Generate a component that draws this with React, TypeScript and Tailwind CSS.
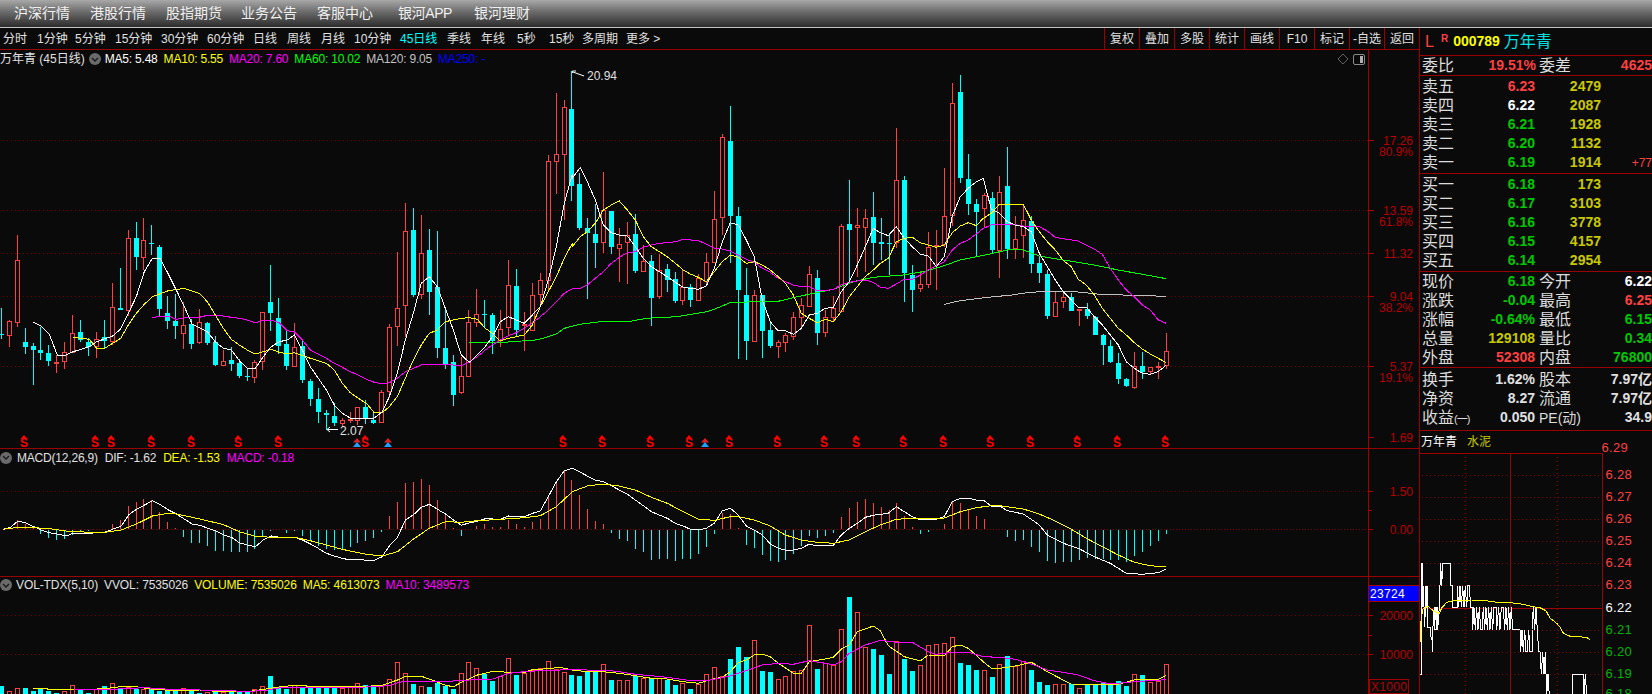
import React from "react";

type P = number[];
const RED = "#ff4040";
const CYAN = "#00ffff";
const AX = "#b80000";

// segment helper: [scaleX, offsetX, offsetY, [zx,zy,zx,zy,...]]; y is always zoom/3
type Seg = [number, number, number, P];
function line(segs: Seg[]): string {
  const out: string[] = [];
  let last = -1;
  for (const [sx, ox, oy, p] of segs) {
    for (let i = 0; i < p.length; i += 2) {
      const x = ox + p[i] / sx;
      if (x <= last) continue;
      last = x;
      out.push(`${x.toFixed(1)},${(oy + p[i + 1] / 3).toFixed(1)}`);
    }
  }
  return out.join(" ");
}
const cx = (k: number) => Math.round(0.8 + 7.926 * k);

// [red?, high, top, bottom, low]
const C: number[][] = [
  [0,775,852,856,866],[1,810,814,857,890],[1,555,631,818,830],[0,835,877,890,912],[0,880,888,900,1005],[0,830,900,908,930],[0,885,910,933,948],[1,915,937,941,968],
  [1,877,905,937,957],[1,795,848,908,910],[0,810,847,870,875],[0,865,875,890,918],[1,847,868,890,923],[0,810,862,872,895],[1,700,772,876,885],[0,655,775,779,780],
  [1,540,565,782,798],[0,517,565,620,660],[1,505,571,623,660],[0,525,579,581,615],[0,585,592,776,800],[0,738,790,812,837],[0,733,814,827,867],[1,755,826,851,897],
  [0,808,823,882,897],[1,777,817,880,882],[0,815,820,878,885],[0,858,875,945,948],[1,900,934,947,948],[0,890,931,942,963],[0,928,940,977,983],[0,955,978,981,993],
  [1,930,937,983,998],[1,787,787,937,960],[0,645,757,788,843],[0,744,805,887,912],[0,843,883,947,960],[1,820,890,950,950],[0,870,888,990,998],[0,987,993,1047,1068],
  [0,1015,1048,1086,1118],[0,1080,1090,1094,1140],[0,1060,1098,1118,1128],[1,1105,1110,1122,1130],[1,1085,1108,1112,1118],[1,1072,1072,1112,1125],[0,1050,1072,1108,1122],[0,1085,1110,1118,1122],
  [1,1020,1027,1120,1120],[1,822,832,1027,1045],[1,605,775,830,888],[1,460,544,767,860],[0,475,540,735,740],[1,495,610,735,748],[0,537,600,725,795],[0,543,710,893,924],
  [0,770,894,943,957],[0,915,936,1035,1068],[1,920,978,1028,1032],[1,780,817,980,980],[1,717,793,818,830],[0,750,792,796,830],[0,788,795,873,912],[1,780,838,873,890],
  [1,630,706,835,855],[0,657,708,840,858],[1,785,822,823,902],[1,698,736,842,842],[1,670,690,736,770],[1,315,333,693,722],[1,129,313,335,432],[1,150,172,314,510],
  [0,62,177,407,453],[0,370,402,533,540],[0,505,534,549,747],[0,462,552,578,655],[1,366,480,578,610],[0,482,483,590,612],[1,535,583,596,695],[1,517,555,580,702],
  [0,492,552,664,668],[1,585,634,665,665],[0,615,634,743,828],[1,612,661,740,747],[0,642,657,690,725],[0,666,688,752,758],[1,660,712,754,765],[0,702,712,750,770],
  [1,672,683,752,752],[1,610,637,695,705],[1,423,508,638,640],[1,252,262,505,555],[0,168,273,497,640],[0,472,498,720,927],[0,653,735,873,930],[1,720,736,875,875],
  [0,735,735,842,923],[0,815,840,888,893],[1,870,877,890,923],[1,850,856,878,905],[1,785,802,860,870],[1,745,766,803,838],[1,648,673,770,770],[0,660,684,848,885],
  [1,780,802,848,860],[1,738,774,803,815],[1,522,529,785,785],[0,390,522,540,690],[1,475,526,533,680],[1,477,505,533,665],[0,427,502,578,645],[0,503,576,581,630],
  [0,548,578,580,675],[1,235,391,578,595],[0,378,390,668,755],[0,645,676,720,785],[1,662,703,716,725],[1,545,592,705,715],[1,540,584,591,720],[1,355,498,584,590],
  [1,100,160,498,527],[0,75,127,383,398],[0,312,388,462,495],[0,447,462,486,618],[1,430,435,478,535],[0,427,445,600,613],[1,378,427,602,683],[0,292,408,597,627],
  [1,498,568,597,627],[1,462,511,557,623],[0,498,514,641,668],[0,622,640,668,698],[0,660,672,797,808],[1,725,757,800,800],[1,722,742,757,773],[0,730,742,782,783],
  [1,778,778,782,828],[0,760,776,797,808],[0,798,800,855,855],[0,852,855,885,945],[0,870,888,935,940],[0,910,940,987,1002],[0,985,988,1007,1012],[1,907,949,1013,1018],
  [0,905,949,966,987],[1,950,950,966,972],[1,937,947,953,987],[1,849,904,947,957],
];

const MA5 = line([
  [3,0,50,[100,817,124,828,148,853,172,915,196,916,220,905,268,890,290,875,338,858,362,837,385,790,409,740,433,665,457,625,481,625,529,720,553,770,577,823,622,845,646,875,670,895,694,900,718,932,742,955,766,955,790,920,814,890,838,875,862,870]],
  [3,290,50,[13,855,37,900,61,950,85,985,109,1020,133,1065,157,1090,181,1104,229,1104,253,1104,277,1085,298,1040,322,970,346,870,370,790,394,700,418,680,442,710,466,775,490,840,514,915,538,937,562,915,586,890,607,860,631,815,655,800,679,810,703,820,727,795,751,770,775,690,799,590,823,460,847,372]],
  [3,560,50,[37,385,61,352,82,395,106,450,130,525,154,548,178,555,202,558,226,590,250,625,274,650,298,665,322,680,346,697,370,712,391,715,415,718,439,708,463,655,487,575,511,518,535,525,559,570,583,620,607,750,631,815,655,843,676,842,700,853,724,835,748,795,772,790,796,775,820,772,844,725,868,695,892,645,916,590,940,535,961,548,985,557,1009,530,1033,565,1057,590,1081,613,1105,618,1129,650,1153,620,1177,498,1201,440,1225,415,1249,395,1270,385,1294,478,1318,490,1342,515]],
  [3,1000,50,[46,525,70,530,94,545,118,610,142,650,166,690,190,725,214,750,235,772,259,772,283,800,307,825,331,855,355,885,379,935,403,955,427,970,451,973,475,965,499,945]],
]);
const MA10 = line([
  [3,0,50,[220,862,268,868,290,895,314,895,362,865,385,825,409,790,433,763,457,740,505,722,553,715,598,730,622,755,646,795,670,835,694,868,718,885,742,900,766,912,790,905,814,898,838,907,862,912]],
  [3,290,50,[13,908,61,925,85,932,109,940,133,960,157,1000,181,1028,205,1045,229,1060,253,1088,277,1088,298,1070,322,1040,346,985,370,930,394,885,418,850,442,840,466,815,514,805,538,803,562,808,586,835,607,850,631,873,655,865,703,855,727,825,751,770,775,725,799,680,823,625,847,580]],
  [3,560,50,[37,590,61,560,82,545,106,520,130,480,154,465,178,453,202,480,226,510,250,560,274,590,298,605,322,620,346,640,370,660,391,672,415,682,439,695,463,665,487,635,511,615,535,622,559,640,583,635,607,645,631,660,655,680,676,700,700,735,724,790,748,805,772,818,796,808,820,815,844,785,868,740,892,710,916,680,940,660,961,640,985,625,1009,575,1033,565,1057,562,1081,578,1105,585,1129,592,1153,585,1177,548,1201,528,1225,518,1249,527,1270,505,1294,490,1318,463,1350,463]],
  [3,1000,50,[70,463,94,510,118,545,142,575,166,600,190,632,214,650,235,688,259,705,283,735,307,775,331,805,355,835,379,855,403,878,427,897,451,912,475,925,499,938]],
]);
const MA20 = line([
  [3,0,50,[457,802,505,798,529,808,553,804,598,802,622,796,646,796,670,798,694,802,718,805,742,810,766,818,790,811,814,811,838,818,862,842]],
  [3,290,50,[13,845,37,870,61,900,109,925,133,940,157,952,181,965,205,975,229,988,253,997,277,1002,298,998,322,985,346,965,370,955,394,945,418,942,466,942,514,948,538,935,562,920,586,900,607,885,631,870,655,857,679,848,703,835,727,820,751,800,775,780,799,755,823,730,847,716]],
  [3,560,50,[13,730,37,717,61,715,82,705,106,685,130,665,154,640,178,622,202,608,226,605,250,592,274,585,298,580,322,578,346,575,370,568,415,572,439,582,463,594,487,597,511,603,535,615,559,628,583,637,607,655,631,667,655,685,676,695,700,705,724,710,748,710,772,722,796,722,820,718,844,705,868,697,892,693,916,690,940,697,961,712,985,715,1009,702,1033,688,1057,688,1081,675,1105,660,1129,648,1153,635,1177,600,1201,580,1225,570,1249,552,1270,535,1294,525,1318,522,1350,522]],
  [3,1000,50,[70,528,118,530,142,543,166,562,190,566,235,573,259,585,283,597,307,613,331,655,355,690,379,720,403,740,427,765,451,780,475,810,499,820]],
]);
const MA60 = line([
  [3,290,50,[538,877,610,878,655,876,735,870,760,865,799,852,823,835,870,823]],
  [3,560,50,[25,828,60,820,120,815,210,814,260,805,350,800,440,785,470,775,510,758,560,756,650,755,700,743,760,730,820,718,880,695,940,682,1030,675,1090,665,1150,648,1200,630,1290,612,1350,598]],
  [3,1000,50,[46,597,70,600,118,618,190,630,283,645,355,660,427,673,499,686]],
]);
const MA120 = line([
  [3,560,50,[1153,763,1200,752,1300,740,1350,736]],
  [3,1000,50,[80,728,120,725,225,725,300,733,499,739]],
]);

const HIST: number[] = [0,0,26,16,6,-12,-24,-30,-27,-14,-5,-2,0,0,16,26,68,80,91,88,51,20,2,-20,-38,-39,-47,-62,-62,-65,-67,-67,-57,-20,-2,0,-8,-2,-18,-34,-47,-57,-60,-59,-50,-38,-32,-25,-5,40,80,139,140,151,133,88,43,2,-17,0,10,16,6,6,28,16,6,20,31,98,138,176,148,103,61,25,16,-8,-26,-32,-56,-65,-89,-86,-86,-92,-86,-86,-71,-50,-11,48,46,4,-44,-53,-74,-92,-95,-89,-71,-47,-17,-23,-17,-8,37,64,82,91,79,67,58,79,40,7,-11,-5,0,16,82,79,61,40,31,0,0,-20,-32,-29,-50,-65,-92,-98,-95,-95,-89,-83,-86,-88,-89,-89,-95,-77,-65,-47,-32,-11];

const DIF = line([
  [2.8,0,450,[8,238,30,232,50,213,70,218,95,230,115,240,138,248,160,252,185,258,205,250,250,250,295,246,315,238,340,228,360,195,382,178,405,165,427,152,450,165,472,180,494,192,516,207,538,222,560,226,582,235,604,243,626,255,648,262,670,278,692,285,715,290,737,270,760,258,782,262,825,262,847,270,869,282,891,295,914,310,936,318,958,325,981,330,1003,328,1026,331,1048,331,1070,320,1090,288,1113,262,1135,210,1157,195,1180,172,1202,163,1225,178,1247,192,1270,210,1292,226,1315,218,1337,214,1359,206,1401,208,1424,198,1446,200,1469,200,1491,190,1513,183,1535,140,1558,95]],
  [3,560,440,[13,92,37,85,61,97,82,108,106,120,130,125,154,137,178,150,202,162,226,180,250,197,274,215,298,225,322,235,346,250,370,258,391,268,415,270,439,265,463,250,487,212,511,205,535,225,559,258,583,270,607,285,631,312,655,325,676,330,700,330,724,325,748,312,772,318,820,316,844,285,868,265,892,250,916,232,940,226,985,220,1009,200,1033,215,1057,230,1081,240,1129,238,1153,230,1177,185,1201,175,1225,175,1249,180,1270,180,1294,198,1318,198]],
  [3,1000,440,[0,198,22,212,70,222,94,238,118,255,142,285,166,297,190,310,235,325,283,350,331,370,379,400,427,403,475,398,499,387]],
]);
const DEA = line([
  [2.8,0,450,[8,238,50,232,95,233,138,236,185,243,250,247,295,247,340,240,382,222,427,198,470,190,494,192,560,207,626,224,670,245,715,259,760,262,825,262,869,272,914,285,958,298,1026,313,1070,318,1113,305,1157,268,1202,235,1247,215,1292,217,1337,212,1401,208,1469,203,1513,197,1558,170]],
  [3,560,440,[37,155,82,138,130,132,178,138,226,150,274,172,322,190,370,215,415,238,463,241,511,230,535,230,583,240,631,258,676,285,724,300,772,307,820,310,868,300,916,275,961,255,1009,238,1057,235,1105,237,1153,234,1201,215,1249,203,1294,197]],
  [3,1000,440,[0,197,70,207,118,222,166,243,214,268,259,295,307,320,355,345,403,367,451,377,499,381]],
]);

const VOL: number[] = [-23,10,19,-17,-9,-19,-8,-4,9,26,-12,-2,16,-23,34,-17,21,-15,14,-17,-10,-8,-9,19,-9,-4,6,-9,6,-7,-6,-9,14,23,-53,-21,-16,26,-18,-18,-23,-22,-18,18,20,34,-26,-20,26,44,95,64,-30,25,-20,-33,-25,-14,64,95,79,-60,-38,55,109,-56,64,73,77,98,76,66,-58,-55,-67,-70,90,-43,43,42,-54,48,-45,48,-42,-28,33,-16,30,60,81,55,-106,-142,-112,162,-70,-67,46,54,69,72,207,-76,94,88,195,-292,246,142,-136,-118,-61,159,-106,-70,87,147,150,154,171,-94,-88,-73,72,-52,90,-115,85,100,-73,-37,-28,30,30,-30,18,-30,-30,-32,-27,-40,-25,60,-58,35,40,90];

const VY = line([
  [2.8,0,450,[93,716,115,714,138,718,205,720,250,718,293,716,338,710,382,710,427,718,494,722,560,720,626,726,692,725,738,718,782,711,825,706,891,710,958,710,1026,709,1070,706,1113,690,1135,679,1180,679,1202,687,1247,706,1270,710,1292,697,1337,675,1381,664,1424,667,1469,667,1491,659,1535,656]],
  [3,560,440,[0,682,37,690,82,695,130,695,178,700,226,707,274,715,322,717,370,725,415,730,463,716,487,712,511,695,535,668,559,660,583,645,607,643,631,650,655,670,700,700,724,700,748,665,796,657,820,652,844,627,868,615,892,575,940,558,961,572,985,617,1033,650,1081,663,1105,645,1153,648,1177,620,1201,615,1225,625,1270,665,1294,685]],
  [3,1000,440,[0,685,46,678,94,667,118,680,142,695,190,720,214,732,307,733,355,733,403,720,475,718,499,706]],
]);
const VM = line([
  [2.8,0,450,[205,717,293,719,405,713,494,719,560,720,692,724,738,722,782,714,891,713,1026,711,1090,707,1113,698,1135,694,1247,694,1292,692,1337,688,1381,687,1424,670,1469,665,1535,660]],
  [3,560,440,[0,690,37,688,82,690,130,690,178,695,226,703,274,707,322,712,391,722,439,722,511,708,559,692,607,675,655,670,700,673,748,662,796,670,820,675,844,665,868,640,916,615,961,601,1009,607,1057,607,1105,635,1129,643,1177,637,1225,637,1270,650,1318,652]],
  [3,1000,440,[0,652,46,658,94,672,142,690,190,697,235,705,283,722,331,732,403,725,451,722,499,719]],
]);

const SX = [24,95,111,151,191,238,278,365,562.7,602,650,689,729,777,824,856,903,943,990,1030,1077,1117,1165];
const UP = [357,388,705];

const TICKS: [number, string, string?][] = [[140,"17.26","80.9%"],[210,"13.59","61.8%"],[253,"11.32"],[296,"9.04","38.2%"],[366,"5.37","19.1%"],[437,"1.69"]];

function Dots({ y, x2 = 1368 }: { y: number; x2?: number }) {
  return <line x1={3} x2={x2} y1={y + 0.5} y2={y + 0.5} stroke="#7a0000" strokeDasharray="1 3" />;
}

function Main() {
  return (
    <svg width={1419} height={380} viewBox="0 68 1419 380" className="block overflow-visible">
      {[140, 210, 253, 296, 366].map((y) => <Dots key={y} y={y} />)}
      <g shapeRendering="crispEdges">
        {C.map((c, k) => {
          const x = cx(k);
          const [r, h, t, b, l] = c;
          const Y = (v: number) => Math.round(50 + v / 3);
          const col = r ? RED : CYAN;
          return (
            <g key={k}>
              <rect x={x} y={Y(h)} width={1} height={Math.max(0, Y(t) - Y(h))} fill={col} />
              <rect x={x} y={Y(b)} width={1} height={Math.max(0, Y(l) - Y(b))} fill={col} />
              {r ? (
                <rect x={x - 1.5} y={Y(t) + 0.5} width={4} height={Math.max(1, Y(b) - Y(t) - 1)} fill="#0a0a0a" stroke={col} />
              ) : (
                <rect x={x - 2} y={Y(t)} width={5} height={Math.max(1, Y(b) - Y(t))} fill={col} />
              )}
            </g>
          );
        })}
        <polyline points={MA120} fill="none" stroke="#c0c0c0" />
        <polyline points={MA60} fill="none" stroke="#00ff00" />
        <polyline points={MA20} fill="none" stroke="#ff00ff" />
        <polyline points={MA10} fill="none" stroke="#ffff00" />
        <polyline points={MA5} fill="none" stroke="#ffffff" />
      </g>
      {/* high and low annotations */}
      <path d="M572.5 73 L572.5 71 L576 71 M573 72 L584 76" fill="none" stroke="#ffffff" />
      <text x={587} y={80} fontSize={12} fill="#e0e0e0">20.94</text>
      <path d="M327 429.5 L338 429.5 M327 429.5 L330 427 M327 429.5 L330 432" fill="none" stroke="#ffffff" />
      <text x={340} y={435} fontSize={12} fill="#e0e0e0">2.07</text>
      {/* signal markers */}
      {SX.map((x, i) => (
        <g key={i}>
          <polygon points={`${x},435 ${x - 3.5},439 ${x + 3.5},439`} fill="#ff0000" />
          <text x={x} y={447} textAnchor="middle" fontSize={12} fontWeight={700} fill="#ff0000">S</text>
        </g>
      ))}
      {UP.map((x) => (
        <g key={x}>
          <polygon points={`${x},438 ${x - 4},442.5 ${x + 4},442.5`} fill="#e02020" />
          <polygon points={`${x},442 ${x - 4},447 ${x + 4},447`} fill="#20a0ff" />
        </g>
      ))}
      {/* axis */}
      <line x1={1368.5} x2={1368.5} y1={68} y2={448} stroke="#a00000" />
      {TICKS.map(([y, a, b]) => (
        <g key={a}>
          <line x1={1369} x2={1374} y1={y + 0.5} y2={y + 0.5} stroke="#a00000" />
          <text x={1413} y={y + 4.5} textAnchor="end" fontSize={12} fill={AX}>{a}</text>
          {b && <text x={1413} y={y + 15.5} textAnchor="end" fontSize={12} fill={AX}>{b}</text>}
        </g>
      ))}
    </svg>
  );
}

function Macd() {
  return (
    <svg width={1419} height={110} viewBox="0 466 1419 110" className="block">
      <Dots y={491} />
      <line x1={3} x2={1368} y1={529.5} y2={529.5} stroke="#800000" strokeDasharray="1 2" />
      <g shapeRendering="crispEdges">
        {HIST.map((v, k) =>
          v === 0 ? null : (
            <rect key={k} x={cx(k)} y={v > 0 ? 529 - v / 3 : 530} width={1} height={Math.abs(v) / 3} fill={v > 0 ? RED : CYAN} />
          ),
        )}
        <polyline points={DIF} fill="none" stroke="#ffffff" />
        <polyline points={DEA} fill="none" stroke="#ffff00" />
      </g>
      <line x1={1368.5} x2={1368.5} y1={466} y2={576} stroke="#a00000" />
      <line x1={1369} x2={1373} y1={491.5} y2={491.5} stroke="#a00000" />
      <line x1={1369} x2={1372} y1={510.5} y2={510.5} stroke="#a00000" />
      <line x1={1369} x2={1373} y1={529.5} y2={529.5} stroke="#a00000" />
      <text x={1413} y={495.5} textAnchor="end" fontSize={12} fill={AX}>1.50</text>
      <text x={1413} y={533.5} textAnchor="end" fontSize={12} fill={AX}>0.00</text>
    </svg>
  );
}

function Volume() {
  return (
    <svg width={1419} height={101} viewBox="0 593 1419 101" className="block">
      <Dots y={615} />
      <Dots y={654} />
      <g shapeRendering="crispEdges">
        {VOL.map((v, k) => {
          const x = cx(k);
          const h = Math.round(Math.abs(v) / 3);
          return v > 0 ? (
            <rect key={k} x={x - 1.5} y={694 - h + 0.5} width={4} height={h} fill="#0a0a0a" stroke={RED} />
          ) : (
            <rect key={k} x={x - 2} y={694 - h} width={5} height={h} fill={CYAN} />
          );
        })}
        <polyline points={VY} fill="none" stroke="#ffff00" />
        <polyline points={VM} fill="none" stroke="#ff00ff" />
      </g>
      <line x1={1368.5} x2={1368.5} y1={593} y2={694} stroke="#a00000" />
      <line x1={1369} x2={1373} y1={615.5} y2={615.5} stroke="#a00000" />
      <line x1={1369} x2={1372} y1={635.5} y2={635.5} stroke="#a00000" />
      <line x1={1369} x2={1373} y1={654.5} y2={654.5} stroke="#a00000" />
      <text x={1413} y={619.5} textAnchor="end" fontSize={12} fill={AX}>20000</text>
      <text x={1413} y={658.5} textAnchor="end" fontSize={12} fill={AX}>10000</text>
      <rect x={1369.5} y={679.5} width={39} height={14} fill="none" stroke="#a00000" />
      <text x={1371} y={691} fontSize={12} letterSpacing={0.3} fill={AX}>X1000</text>
    </svg>
  );
}

const Circle = () => (
  <span className="flex h-[12px] w-[12px] flex-none items-center justify-center rounded-full bg-[#6a6a6a]">
    <svg width={8} height={5} viewBox="0 0 8 5">
      <path d="M1 1 L4 4 L7 1" fill="none" stroke="#1a1a1a" strokeWidth={1.4} />
    </svg>
  </span>
);

const MENU: [string, string][] = [
  ["沪深行情", "ml-[14px]"],
  ["港股行情", "ml-[20px]"],
  ["股指期货", "ml-[20px]"],
  ["业务公告", "ml-[19px]"],
  ["客服中心", "ml-[20px]"],
  ["银河APP", "ml-[25px] tracking-[-0.4px]"],
  ["银河理财", "ml-[22px]"],
];

const PERIODS: [string, string][] = [
  ["分时", "w-[34px]"], ["1分钟", "w-[38px]"], ["5分钟", "w-[40px]"], ["15分钟", "w-[46px]"], ["30分钟", "w-[46px]"], ["60分钟", "w-[46px]"],
  ["日线", "w-[34px]"], ["周线", "w-[34px]"], ["月线", "w-[33px]"], ["10分钟", "w-[46px]"], ["45日线", "w-[47px] text-[#00ffff]"], ["季线", "w-[34px]"],
  ["年线", "w-[36px]"], ["5秒", "w-[32px]"], ["15秒", "w-[33px]"], ["多周期", "w-[44px]"], ["更多 >", "w-[36px]"],
];

const TOOLS = ["复权", "叠加", "多股", "统计", "画线", "F10", "标记", "-自选", "返回"];

function Quote({ l, p, pc, v, e }: { l: string; p: string; pc: string; v: string; e?: string }) {
  return (
    <div className="flex h-[19px] items-center">
      <span className="ml-[2px] w-[32px] flex-none text-[16px] text-[#dcdcdc]">{l}</span>
      <span className={`w-[81px] flex-none text-right text-[14px] font-bold ${pc}`}>{p}</span>
      <span className="w-[66px] flex-none text-right text-[14px] font-bold text-[#c8c800]">{v}</span>
      {e && <span className="flex-1 text-right text-[12px] text-[#ff4040]">{e}</span>}
    </div>
  );
}

function Stat({ a, av, ac, b, bv, bc }: { a: React.ReactNode; av: string; ac: string; b: React.ReactNode; bv: string; bc: string }) {
  return (
    <div className="flex h-[19px] items-center">
      <span className="ml-[2px] flex w-[113px] flex-none items-center justify-between">
        <span className="text-[16px] text-[#dcdcdc]">{a}</span>
        <span className={`text-[14px] font-bold ${ac}`}>{av}</span>
      </span>
      <span className="ml-[4px] flex flex-1 items-center justify-between">
        <span className="text-[16px] text-[#dcdcdc]">{b}</span>
        <span className={`text-[14px] font-bold ${bc}`}>{bv}</span>
      </span>
    </div>
  );
}

const TL = "61,630 65,630 65,298 66,298 66,430 70,365 74,490 78,365 78,430 82,365 82,490 90,490 90,495 94,525 97,525 97,565 98,500 103,430 103,497 108,430 108,497 113,430 113,497 118,430 122,298 125,365 128,298 132,298 150,298 152,365 158,365 158,430 172,430 172,365 176,430 180,365 184,430 188,365 192,430 196,365 200,430 204,365 208,365 212,430 216,430 218,497 222,430 226,497 230,430 234,497 238,430 242,497 246,497 250,430 254,497 258,430 262,497 266,430 270,497 274,430 278,497 282,430 290,430 290,497 296,430 300,497 304,430 310,430 314,497 318,430 322,497 326,430 330,497 334,430 338,497 342,497 360,497 362,563 366,497 370,563 374,497 378,563 382,563 386,497 390,563 396,563 396,497 400,430 404,497 408,430 412,497 416,563 420,563 424,630 428,563 432,630 436,563 438,630 440,695 444,630 448,695 452,697 485,697 500,697 516,697 518,630 522,630 550,630 552,695 556,630 560,695 570,697"
  .split(" ")
  .map((s) => { const [a, b] = s.split(",").map(Number); return `${(1400 + a / 3).toFixed(1)},${(460 + b / 3).toFixed(1)}`; })
  .join(" ");
const YL = "60,535 63,470 68,435 84,427 100,440 118,448 125,432 140,415 160,410 215,408 240,408 285,414 330,416 370,421 400,428 420,431 438,440 450,462 470,478 480,490 490,507 510,517 560,520 570,527"
  .split(" ")
  .map((s) => { const [a, b] = s.split(",").map(Number); return `${(1400 + a / 3).toFixed(1)},${(460 + b / 3).toFixed(1)}`; })
  .join(" ");

const PRICES: [string, number, string][] = [
  ["6.28", 471, "#ff4040"], ["6.27", 493, "#ff4040"], ["6.26", 515, "#ff4040"], ["6.25", 537, "#ff4040"], ["6.24", 559, "#ff4040"], ["6.23", 581, "#ff4040"],
  ["6.22", 604, "#ffffff"], ["6.21", 626, "#00b400"], ["6.20", 648, "#00b400"], ["6.19", 670, "#00b400"], ["6.18", 690, "#00b400"],
];

function Intraday() {
  return (
    <svg width={232} height={245} viewBox="1420 449 232 245" className="block">
      <line x1={1420} x2={1602} y1={449.5} y2={449.5} stroke="#a00000" />
      {PRICES.map(([s, y]) =>
        s === "6.22" ? (
          <line key={s} x1={1420} x2={1602} y1={y + 0.5} y2={y + 0.5} stroke="#a00000" />
        ) : (
          <line key={s} x1={1422} x2={1602} y1={y + 0.5} y2={y + 0.5} stroke="#8a0000" strokeDasharray="1 3" />
        ),
      )}
      <line x1={1465.5} x2={1465.5} y1={449} y2={694} stroke="#8a0000" strokeDasharray="1 3" />
      <line x1={1557.5} x2={1557.5} y1={449} y2={694} stroke="#8a0000" strokeDasharray="1 3" />
      <line x1={1510.5} x2={1510.5} y1={449} y2={694} stroke="#a00000" />
      <line x1={1602.5} x2={1602.5} y1={449} y2={694} stroke="#a00000" />
      <g shapeRendering="crispEdges">
        <polyline points={TL} fill="none" stroke="#ffffff" />
        <polyline points={YL} fill="none" stroke="#ffff00" />
      </g>
      {PRICES.map(([s, y, c]) => (
        <text key={s} x={1605.5} y={y + 4} fontSize={13} letterSpacing={0.3} fill={c}>{s}</text>
      ))}
    </svg>
  );
}

export default function App() {
  const B = "border-b border-[#9a0000]";
  return (
    <div className="flex h-[694px] w-[1652px] flex-col overflow-hidden bg-[#0a0a0a] font-['Liberation_Sans','Noto_Sans_CJK_SC',sans-serif] text-[12px] text-[#e0e0e0]">
      <div className="flex h-[28px] flex-none items-center border-b border-[#c4c4c4] bg-[linear-gradient(to_bottom,#a8a8a8,#6a6a6a_45%,#2c2c2c)] text-[14px] text-[#f0f0f0]">
        {MENU.map(([t, c]) => <span key={t} className={c}>{t}</span>)}
      </div>
      <div className="flex min-h-0 flex-1">
        <div className="flex w-[1420px] flex-none flex-col border-r border-[#9a0000]">
          <div className={`flex h-[22px] flex-none items-center ${B}`}>
            <div className="ml-[3px] flex w-[1100px] flex-none">
              {PERIODS.map(([t, c]) => <span key={t} className={`flex-none whitespace-nowrap ${c}`}>{t}</span>)}
            </div>
            <div className="ml-auto flex h-full flex-none">
              {TOOLS.map((t) => (
                <span key={t} className="flex h-full w-[35px] flex-none items-center justify-center border-l border-[#9a0000]">{t}</span>
              ))}
            </div>
          </div>
          <div className={`h-[399px] flex-none ${B}`}>
            <div className="flex h-[18px] w-[1369px] items-center border-r border-[#a00000]">
              <span className="whitespace-pre">万年青 (45日线)</span>
              <span className="ml-[4px]"><Circle /></span>
              <div className="ml-[4px] flex items-center gap-[6px] tracking-[-0.2px]">
                <span className="text-white">MA5: 5.48</span>
                <span className="text-[#ffff00]">MA10: 5.55</span>
                <span className="text-[#ff00ff]">MA20: 7.60</span>
                <span className="text-[#00ff00]">MA60: 10.02</span>
                <span className="text-[#c0c0c0]">MA120: 9.05</span>
                <span className="text-[#0000ff]">MA250: -</span>
              </div>
              <div className="ml-auto mr-[3px] flex items-center gap-[3px]">
                <svg width={12} height={12} viewBox="0 0 12 12" className="mr-[1px]">
                  <polygon points="6,1 11,6 6,11 1,6" fill="none" stroke="#606060" />
                </svg>
                <svg width={12} height={11} viewBox="0 0 12 11">
                  <rect x={0.5} y={0.5} width={11} height={10} rx={1.5} fill="none" stroke="#8a8a8a" />
                  <rect x={7} y={2} width={3} height={7} fill="#b0b0b0" />
                </svg>
              </div>
            </div>
            <Main />
          </div>
          <div className={`h-[128px] flex-none ${B}`}>
            <div className="flex h-[17px] w-[1369px] items-center gap-[7px] border-r border-[#a00000] tracking-[-0.2px]">
              <Circle />
              <span className="ml-[-2px]">MACD(12,26,9)</span>
              <span>DIF: -1.62</span>
              <span className="text-[#ffff00]">DEA: -1.53</span>
              <span className="text-[#ff00ff]">MACD: -0.18</span>
            </div>
            <Macd />
          </div>
          <div className="relative min-h-0 flex-1">
            <div className="flex h-[16px] w-[1369px] items-center gap-[6px] border-r border-[#a00000] tracking-[-0.1px]">
              <Circle />
              <span className="ml-[-2px]">VOL-TDX(5,10)</span>
              <span>VVOL: 7535026</span>
              <span className="text-[#ffff00]">VOLUME: 7535026</span>
              <span className="text-[#ffff00]">MA5: 4613073</span>
              <span className="text-[#ff00ff]">MA10: 3489573</span>
            </div>
            <div className="absolute left-[1369px] top-[8px] flex h-[17px] w-[50px] items-center border-y border-[#a00000] bg-[#0000ff] pl-[1px] text-[12px] tracking-[0.3px] text-white">23724</div>
            <Volume />
          </div>
        </div>
        <div className="flex w-[232px] flex-none flex-col">
          <div className={`flex h-[28px] flex-none items-center ${B}`}>
            <span className="ml-[5px] text-[16px] text-[#ff4040]">L</span>
            <span className="ml-[7px] mb-[7px] text-[10px] font-bold text-[#ff4040]">R</span>
            <span className="ml-[5px] text-[14px] font-bold text-[#ffff00]">000789</span>
            <span className="ml-[4px] text-[16px] text-[#00e0e0]">万年青</span>
          </div>
          <div className={`flex h-[20px] flex-none items-center ${B}`}>
            <span className="ml-[2px] w-[32px] flex-none text-[16px] text-[#dcdcdc]">委比</span>
            <span className="w-[82px] flex-none text-right text-[14px] font-bold text-[#ff4040]">19.51%</span>
            <span className="ml-[3px] w-[32px] flex-none text-[16px] text-[#dcdcdc]">委差</span>
            <span className="flex-1 text-right text-[14px] font-bold text-[#ff4040]">4625</span>
          </div>
          <div className={`flex-none py-px ${B}`}>
            <Quote l="卖五" p="6.23" pc="text-[#ff4040]" v="2479" />
            <Quote l="卖四" p="6.22" pc="text-white" v="2087" />
            <Quote l="卖三" p="6.21" pc="text-[#00c800]" v="1928" />
            <Quote l="卖二" p="6.20" pc="text-[#00c800]" v="1132" />
            <Quote l="卖一" p="6.19" pc="text-[#00c800]" v="1914" e="+77" />
          </div>
          <div className={`flex-none py-px ${B}`}>
            <Quote l="买一" p="6.18" pc="text-[#00c800]" v="173" />
            <Quote l="买二" p="6.17" pc="text-[#00c800]" v="3103" />
            <Quote l="买三" p="6.16" pc="text-[#00c800]" v="3778" />
            <Quote l="买四" p="6.15" pc="text-[#00c800]" v="4157" />
            <Quote l="买五" p="6.14" pc="text-[#00c800]" v="2954" />
          </div>
          <div className={`flex-none ${B}`}>
            <Stat a="现价" av="6.18" ac="text-[#00c800]" b="今开" bv="6.22" bc="text-white" />
            <Stat a="涨跌" av="-0.04" ac="text-[#00c800]" b="最高" bv="6.25" bc="text-[#ff4040]" />
            <Stat a="涨幅" av="-0.64%" ac="text-[#00c800]" b="最低" bv="6.15" bc="text-[#00c800]" />
            <Stat a="总量" av="129108" ac="text-[#c8c800]" b="量比" bv="0.34" bc="text-[#00c800]" />
            <Stat a="外盘" av="52308" ac="text-[#ff4040]" b="内盘" bv="76800" bc="text-[#00c800]" />
          </div>
          <div className={`flex-none pt-[2px] pb-[3px] ${B}`}>
            <Stat a="换手" av="1.62%" ac="text-[#e0e0e0]" b="股本" bv="7.97亿" bc="text-[#e0e0e0]" />
            <Stat a="净资" av="8.27" ac="text-[#e0e0e0]" b="流通" bv="7.97亿" bc="text-[#e0e0e0]" />
            <Stat
              a={<>收益<span className="text-[11px] tracking-[-1px]">(一)</span></>}
              av="0.050"
              ac="text-[#e0e0e0]"
              b={<span className="text-[14px]">PE(动)</span>}
              bv="34.9"
              bc="text-[#e0e0e0]"
            />
          </div>
          <div className="flex h-[22px] flex-none items-center gap-[10px] pl-[1px]">
            <span className="text-white">万年青</span>
            <span className="text-[#c8c800]">水泥</span>
            <span className="ml-auto mr-[24px] mt-[10px] text-[13px] leading-[15px] tracking-[0.3px] text-[#ff4040]">6.29</span>
          </div>
          <div className="min-h-0 flex-1">
            <Intraday />
          </div>
        </div>
      </div>
    </div>
  );
}
